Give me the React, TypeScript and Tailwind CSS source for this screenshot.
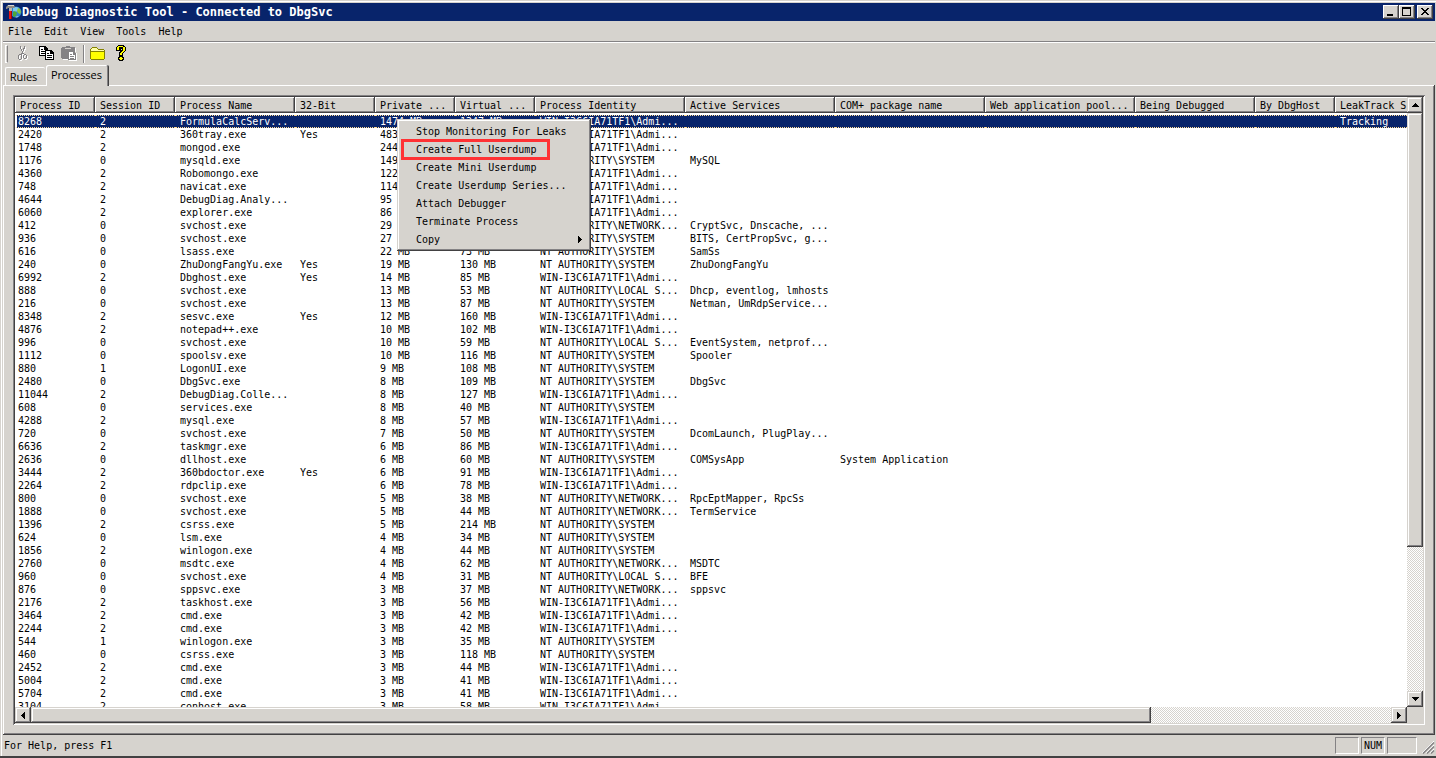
import type { ReactNode } from "react";
import { clsx } from "clsx";

type Process = {
  pid: string;
  session: string;
  name: string;
  bit32?: boolean;
  priv: string;
  virt: string;
  identity: string;
  services?: string;
  com?: string;
  leak?: string;
};

const ADMIN = "WIN-I3C6IA71TF1\\Admi...";
const SYSTEM = "NT AUTHORITY\\SYSTEM";
const NETWORK = "NT AUTHORITY\\NETWORK...";
const LOCAL = "NT AUTHORITY\\LOCAL S...";

const processes: Process[] = [
  { pid: "8268", session: "2", name: "FormulaCalcServ...", priv: "1474 MB", virt: "1347 MB", identity: ADMIN, leak: "Tracking" },
  { pid: "2420", session: "2", name: "360tray.exe", bit32: true, priv: "483 MB", virt: "", identity: ADMIN },
  { pid: "1748", session: "2", name: "mongod.exe", priv: "244 MB", virt: "", identity: ADMIN },
  { pid: "1176", session: "0", name: "mysqld.exe", priv: "149 MB", virt: "", identity: SYSTEM, services: "MySQL" },
  { pid: "4360", session: "2", name: "Robomongo.exe", priv: "122 MB", virt: "", identity: ADMIN },
  { pid: "748", session: "2", name: "navicat.exe", priv: "114 MB", virt: "", identity: ADMIN },
  { pid: "4644", session: "2", name: "DebugDiag.Analy...", priv: "95 MB", virt: "", identity: ADMIN },
  { pid: "6060", session: "2", name: "explorer.exe", priv: "86 MB", virt: "", identity: ADMIN },
  { pid: "412", session: "0", name: "svchost.exe", priv: "29 MB", virt: "", identity: NETWORK, services: "CryptSvc, Dnscache, ..." },
  { pid: "936", session: "0", name: "svchost.exe", priv: "27 MB", virt: "", identity: SYSTEM, services: "BITS, CertPropSvc, g..." },
  { pid: "616", session: "0", name: "lsass.exe", priv: "22 MB", virt: "73 MB", identity: SYSTEM, services: "SamSs" },
  { pid: "240", session: "0", name: "ZhuDongFangYu.exe", bit32: true, priv: "19 MB", virt: "130 MB", identity: SYSTEM, services: "ZhuDongFangYu" },
  { pid: "6992", session: "2", name: "Dbghost.exe", bit32: true, priv: "14 MB", virt: "85 MB", identity: ADMIN },
  { pid: "888", session: "0", name: "svchost.exe", priv: "13 MB", virt: "53 MB", identity: LOCAL, services: "Dhcp, eventlog, lmhosts" },
  { pid: "216", session: "0", name: "svchost.exe", priv: "13 MB", virt: "87 MB", identity: SYSTEM, services: "Netman, UmRdpService..." },
  { pid: "8348", session: "2", name: "sesvc.exe", bit32: true, priv: "12 MB", virt: "160 MB", identity: ADMIN },
  { pid: "4876", session: "2", name: "notepad++.exe", priv: "10 MB", virt: "102 MB", identity: ADMIN },
  { pid: "996", session: "0", name: "svchost.exe", priv: "10 MB", virt: "59 MB", identity: LOCAL, services: "EventSystem, netprof..." },
  { pid: "1112", session: "0", name: "spoolsv.exe", priv: "10 MB", virt: "116 MB", identity: SYSTEM, services: "Spooler" },
  { pid: "880", session: "1", name: "LogonUI.exe", priv: "9 MB", virt: "108 MB", identity: SYSTEM },
  { pid: "2480", session: "0", name: "DbgSvc.exe", priv: "8 MB", virt: "109 MB", identity: SYSTEM, services: "DbgSvc" },
  { pid: "11044", session: "2", name: "DebugDiag.Colle...", priv: "8 MB", virt: "127 MB", identity: ADMIN },
  { pid: "608", session: "0", name: "services.exe", priv: "8 MB", virt: "40 MB", identity: SYSTEM },
  { pid: "4288", session: "2", name: "mysql.exe", priv: "8 MB", virt: "57 MB", identity: ADMIN },
  { pid: "720", session: "0", name: "svchost.exe", priv: "7 MB", virt: "50 MB", identity: SYSTEM, services: "DcomLaunch, PlugPlay..." },
  { pid: "6636", session: "2", name: "taskmgr.exe", priv: "6 MB", virt: "86 MB", identity: ADMIN },
  { pid: "2636", session: "0", name: "dllhost.exe", priv: "6 MB", virt: "60 MB", identity: SYSTEM, services: "COMSysApp", com: "System Application" },
  { pid: "3444", session: "2", name: "360bdoctor.exe", bit32: true, priv: "6 MB", virt: "91 MB", identity: ADMIN },
  { pid: "2264", session: "2", name: "rdpclip.exe", priv: "6 MB", virt: "78 MB", identity: ADMIN },
  { pid: "800", session: "0", name: "svchost.exe", priv: "5 MB", virt: "38 MB", identity: NETWORK, services: "RpcEptMapper, RpcSs" },
  { pid: "1888", session: "0", name: "svchost.exe", priv: "5 MB", virt: "44 MB", identity: NETWORK, services: "TermService" },
  { pid: "1396", session: "2", name: "csrss.exe", priv: "5 MB", virt: "214 MB", identity: SYSTEM },
  { pid: "624", session: "0", name: "lsm.exe", priv: "4 MB", virt: "34 MB", identity: SYSTEM },
  { pid: "1856", session: "2", name: "winlogon.exe", priv: "4 MB", virt: "44 MB", identity: SYSTEM },
  { pid: "2760", session: "0", name: "msdtc.exe", priv: "4 MB", virt: "62 MB", identity: NETWORK, services: "MSDTC" },
  { pid: "960", session: "0", name: "svchost.exe", priv: "4 MB", virt: "31 MB", identity: LOCAL, services: "BFE" },
  { pid: "876", session: "0", name: "sppsvc.exe", priv: "3 MB", virt: "37 MB", identity: NETWORK, services: "sppsvc" },
  { pid: "2176", session: "2", name: "taskhost.exe", priv: "3 MB", virt: "56 MB", identity: ADMIN },
  { pid: "3464", session: "2", name: "cmd.exe", priv: "3 MB", virt: "42 MB", identity: ADMIN },
  { pid: "2244", session: "2", name: "cmd.exe", priv: "3 MB", virt: "42 MB", identity: ADMIN },
  { pid: "544", session: "1", name: "winlogon.exe", priv: "3 MB", virt: "35 MB", identity: SYSTEM },
  { pid: "460", session: "0", name: "csrss.exe", priv: "3 MB", virt: "118 MB", identity: SYSTEM },
  { pid: "2452", session: "2", name: "cmd.exe", priv: "3 MB", virt: "44 MB", identity: ADMIN },
  { pid: "5004", session: "2", name: "cmd.exe", priv: "3 MB", virt: "41 MB", identity: ADMIN },
  { pid: "5704", session: "2", name: "cmd.exe", priv: "3 MB", virt: "41 MB", identity: ADMIN },
  { pid: "3104", session: "2", name: "conhost.exe", priv: "3 MB", virt: "58 MB", identity: ADMIN },
];

const columns = [
  { label: "Process ID", width: "w-[80px]" },
  { label: "Session ID", width: "w-[80px]" },
  { label: "Process Name", width: "w-[120px]" },
  { label: "32-Bit", width: "w-[80px]" },
  { label: "Private ...", width: "w-[80px]" },
  { label: "Virtual ...", width: "w-[80px]" },
  { label: "Process Identity", width: "w-[150px]" },
  { label: "Active Services", width: "w-[150px]" },
  { label: "COM+ package name", width: "w-[150px]" },
  { label: "Web application pool...", width: "w-[150px]" },
  { label: "Being Debugged", width: "w-[120px]" },
  { label: "By DbgHost", width: "w-[80px]" },
  { label: "LeakTrack S...", width: "w-[120px]" },
];

const menuItems = [
  "Stop Monitoring For Leaks",
  "Create Full Userdump",
  "Create Mini Userdump",
  "Create Userdump Series...",
  "Attach Debugger",
  "Terminate Process",
  "Copy",
];

const raised =
  "bg-[#d6d3ce] shadow-[inset_-1px_-1px_0_#424142,inset_1px_1px_0_#d6d3ce,inset_-2px_-2px_0_#848284,inset_2px_2px_0_#fff]";
const raisedThin =
  "bg-[#d6d3ce] shadow-[inset_-1px_-1px_0_#424142,inset_1px_1px_0_#fff,inset_-2px_-2px_0_#848284]";
const track =
  "bg-[length:2px_2px] bg-[repeating-conic-gradient(#fff_0_25%,#d6d3ce_0_50%)]";

const arrows = {
  up: "M4 0h1v1h1v1h1v1h1v1H1V3h1V2h1V1h1z",
  down: "M1 0h7v1H7v1H6v1H5v1H4V3H3V2H2V1H1z",
  left: "M4 0v7H3V6H2V5H1V4H0V3h1V2h1V1h1V0z",
  right: "M0 0v7h1V6h1V5h1V4h1V3H3V2H2V1H1V0z",
};

function ScrollButton({ dir }: { dir: keyof typeof arrows }) {
  const vertical = dir === "up" || dir === "down";
  return (
    <button type="button" aria-label={`Scroll ${dir}`} className={clsx("flex size-4 shrink-0 items-center justify-center", raised)}>
      <svg width={vertical ? 9 : 4} height={vertical ? 4 : 7} shapeRendering="crispEdges">
        <path d={arrows[dir]} />
      </svg>
    </button>
  );
}

function AppIcon() {
  return (
    <svg width="16" height="16" viewBox="0 0 16 16">
      <circle cx="10" cy="8" r="5.5" fill="#2f84cc" />
      <path d="M7 4q3-2 6 0l-1 3-3 1-2-1z" fill="#7cc8ee" />
      <path d="M7 8l2-1 2 2-1 3-2 1-1-1z" fill="#4fa83a" />
      <path d="M12 4l2 1 1 3-1 2-2-1-1-2z" fill="#8cc63f" />
      <path d="M9 13l4-1-2 1.500z" fill="#c8e6f4" />
      <path d="M0 3l2-2h6l1 2-1 1H2L1 5H0z" fill="#8c8a84" />
      <path d="M2 1h6v1H2z" fill="#d8d6d0" />
      <path d="M3 4h3v3H3z" fill="#b8b4ac" />
      <path d="M3 7h3v8H3z" fill="#e81414" />
      <path d="M5 7h1v8H5z" fill="#9c0808" />
    </svg>
  );
}

function ToolButton({ label, children }: { label: string; children: ReactNode }) {
  return (
    <button type="button" aria-label={label} className="flex h-5 w-[23px] items-center justify-start pl-[3px]">
      <svg width="16" height="16" viewBox="0 0 16 16" shapeRendering="crispEdges">
        {children}
      </svg>
    </button>
  );
}

// The scissors are drawn twice: a white copy one pixel down-right gives the disabled look.
const scissors =
  "M5 1h1v3H5zM9 1h1v3H9zM6 4h1v2H6zM8 3h1v3H8zM7 6h1v3H7zM6 8h1v2H6zM8 8h1v1H8zM9 9h2v1H9zM8 10h1v3H8zM11 10h1v3h-1zM9 13h2v1H9zM4 9h2v1H4zM3 10h1v4H3zM6 10h1v4H6zM4 14h2v1H4z";

function Toolbar() {
  return (
    <div role="toolbar" aria-label="Standard" className="flex h-[22px] shrink-0 items-start pl-0.5">
      <div className="mt-0.5 mr-1 h-[18px] w-[3px] border-y border-l border-r border-white border-r-[#848284]" />
      <ToolButton label="Cut">
        <path d={scissors} fill="#fff" transform="translate(1 1)" />
        <path d={scissors} fill="#848284" />
      </ToolButton>
      <ToolButton label="Copy">
        <path d="M1 1h6l3 3v7H1z" />
        <path d="M2 2h4v3h3v5H2z" fill="#fff" />
        <path d="M3 4h2v1H3zM3 6h4v1H3zM3 8h4v1H3z" />
        <path d="M7 5h6l3 3v7H7z" />
        <path d="M8 6h4v3h3v5H8z" fill="#fff" />
        <path d="M13 7h1v1h-1zM9 8h2v1H9zM9 10h5v1H9zM9 12h5v1H9z" />
      </ToolButton>
      <ToolButton label="Paste">
        <path d="M2 14h6v1H2zM14 3h1v4h-1zM15 8h1v8H8v-1h7z" fill="#fff" />
        <path d="M1 2h4V1h4v1h5v5H8v7H1l-1-1V3z" fill="#848284" />
        <path d="M4 3h6v1H4z" fill="#d6d3ce" />
        <path d="M7 6h5l3 3v6H7z" fill="#848284" />
        <path d="M8 7h4v3h2v4H8z" fill="#fff" />
        <path d="M9 9h2v1H9zM9 11h4v1H9zM9 13h4v1H9z" fill="#848284" />
      </ToolButton>
      <div className="mx-0.5 mt-0.5 h-[18px] w-0.5 border-l border-r border-l-[#848284] border-r-white" />
      <ToolButton label="Open">
        <path d="M2 2h5v1h1v1h6v1h1v9h-1v1H1v-1H0V4h1V3h1z" fill="#848200" />
        <path d="M2 3h5v1h1v1h6v1H1V4h1z" fill="#ffffa5" />
        <path d="M1 7h13v7H1z" fill="#ff0" />
        <path d="M1 6h12v1H1z" fill="#848200" />
      </ToolButton>
      <ToolButton label="Help">
        <path d="M5 0h6v1h1v1h1v4h-1v1h-1v1h-1v3H6V7h1V6h1V5h1V4H8v2H3V2h1V1h1zM6 11h4v1h1v3h-1v1H6v-1H5v-3h1z" />
        <path d="M5 1h5v1h2v4h-1v1h-1v1H9v2H7V8h1V7h1V6h1V2H6v3H4V2h1zM7 12h2v1h1v1H9v1H7v-1H6v-1h1z" fill="#ff0" />
      </ToolButton>
    </div>
  );
}

function ProcessTable() {
  return (
    <table className="w-full table-fixed border-separate border-spacing-0 text-left">
      <thead>
        <tr>
          {columns.map((c) => (
            <th key={c.label} scope="col" className={clsx("p-0 pb-0.5 font-normal", c.width)}>
              <div className={clsx("h-4 overflow-hidden pt-px pl-[5px] leading-4 whitespace-nowrap", raisedThin)}>{c.label}</div>
            </th>
          ))}
        </tr>
      </thead>
      <tbody>
        {processes.map((p, i) => {
          const cells = [
            p.pid, p.session, p.name, p.bit32 ? "Yes" : "", p.priv, p.virt,
            p.identity, p.services, p.com, "", "", "", p.leak,
          ];
          return (
            <tr key={p.pid} aria-selected={i === 0}>
              {cells.map((text, col) => (
                <td
                  key={col}
                  className={clsx(
                    "h-[13px] overflow-hidden p-0 leading-[11px] whitespace-nowrap",
                    col === 0 ? "border-l-2 border-l-white pl-px" : "pl-[5px]",
                    i === 0
                      ? "border-y border-y-[#ffdb94] bg-[#08246b] text-white [border-bottom-style:dotted] [border-top-style:dotted]"
                      : "border-y border-y-transparent",
                  )}
                >
                  {text}
                </td>
              ))}
            </tr>
          );
        })}
      </tbody>
    </table>
  );
}

function ContextMenu() {
  return (
    <div role="menu" className={clsx("absolute top-[22px] left-[382px] w-[194px] p-[3px]", raised)}>
      {menuItems.map((item) => (
        <button key={item} type="button" role="menuitem" className="relative flex h-[18px] w-full items-center justify-between pr-1.5 pl-4">
          {item}
          {item === "Copy" && (
            <svg width="4" height="7" shapeRendering="crispEdges">
              <path d={arrows.right} />
            </svg>
          )}
          {item === "Create Full Userdump" && (
            <span className="absolute -top-px left-px h-[21px] w-[149px] border-3 border-[#ff3134]" />
          )}
        </button>
      ))}
    </div>
  );
}

export default function App() {
  return (
    <div className="flex h-screen flex-col overflow-hidden border-b-2 border-b-[#424142] bg-[#d6d3ce] pt-[3px] pr-px pl-[3px] font-['DejaVu_Sans_Mono',monospace] text-[10px] text-black shadow-[inset_1px_1px_0_#d6d3ce,inset_2px_2px_0_#fff]">
      <header className="flex h-[18px] shrink-0 items-center bg-[#08246b] pr-0.5 pl-[3px] text-white">
        <AppIcon />
        <h1 className="flex-1 text-[12px] leading-[18px] font-bold">Debug Diagnostic Tool - Connected to DbgSvc</h1>
        <button type="button" aria-label="Minimize" className={clsx("h-[14px] w-4", raisedThin)}>
          <svg width="16" height="14" shapeRendering="crispEdges"><path d="M4 9h6v2H4z" /></svg>
        </button>
        <button type="button" aria-label="Maximize" className={clsx("h-[14px] w-4", raisedThin)}>
          <svg width="16" height="14" shapeRendering="crispEdges"><path d="M3 2h9v9H3zM4 4v6h7V4z" fillRule="evenodd" /></svg>
        </button>
        <button type="button" aria-label="Close" className={clsx("ml-0.5 h-[14px] w-4", raisedThin)}>
          <svg width="16" height="14" shapeRendering="crispEdges">
            <path d="M4 3h2v1h1v1h2V4h1V3h2v1h-1v1h-1v1H9v1h1v1h1v1h1v1h-2V9H9V8H7v1H6v1H4V9h1V8h1V7h1V6H6V5H5V4H4z" />
          </svg>
        </button>
      </header>

      <nav className="flex h-5 shrink-0 items-center gap-3 pl-[5px]">
        {["File", "Edit", "View", "Tools", "Help"].map((m) => (
          <button key={m} type="button">{m}</button>
        ))}
      </nav>
      <div className="h-0.5 shrink-0 border-t border-b border-t-[#848284] border-b-white" />

      <Toolbar />

      <div role="tablist" className="flex h-5 shrink-0 items-end gap-px pl-0.5 font-['Open_Sans',sans-serif] text-[11px]">
        <button type="button" role="tab" aria-selected={false} className="h-[18px] w-10 rounded-t-xs border-t border-l border-white pr-1 leading-4">
          Rules
        </button>
        <button
          type="button"
          role="tab"
          aria-selected
          className="relative -mb-px h-[21px] w-[63px] rounded-t-xs bg-[#d6d3ce] pr-0.5 pb-0.5 leading-4 shadow-[inset_-1px_0_0_#424142,inset_1px_1px_0_#fff,inset_-2px_0_0_#848284]"
        >
          Processes
        </button>
      </div>

      <main className={clsx("flex min-h-0 flex-1 p-[10px]", raisedThin)}>
        <div className="relative flex min-w-0 flex-1 flex-col p-0.5 shadow-[inset_1px_1px_0_#848284,inset_-1px_-1px_0_#fff,inset_2px_2px_0_#424142,inset_-2px_-2px_0_#d6d3ce]">
          <div className="relative flex min-h-0 flex-1">
            <div className="min-w-0 flex-1 overflow-hidden bg-white">
              <ProcessTable />
            </div>
            <div className={clsx("flex w-4 shrink-0 flex-col", track)}>
              <ScrollButton dir="up" />
              <div className={clsx("grow-3 basis-0", raised)} />
              <div className="grow basis-0" />
              <ScrollButton dir="down" />
            </div>
            <ContextMenu />
          </div>
          <div className="flex h-4 shrink-0">
            <div className={clsx("flex flex-1", track)}>
              <ScrollButton dir="left" />
              <div className={clsx("grow-14 basis-0", raised)} />
              <div className="grow-3 basis-0" />
              <ScrollButton dir="right" />
            </div>
            <div className="w-4 bg-[#d6d3ce]" />
          </div>
        </div>
      </main>

      <footer className="flex h-[21px] shrink-0 items-center gap-0.5 pl-px">
        <p className="flex-1">For Help, press F1</p>
        <div className="h-[17px] w-6 border border-[#848284] border-r-white border-b-white" />
        <div className="h-[17px] w-6 border border-[#848284] border-r-white border-b-white text-center leading-[15px]">NUM</div>
        <div className="h-[17px] w-[30px] border border-[#848284] border-r-white border-b-white" />
        <svg width="16" height="19" viewBox="0 0 16 19">
          <path d="M3 17L15 5M7 17L15 9M11 17L15 13" stroke="#fff" />
          <path d="M4 17.500L15 6.500M8 17.500L15 10.500M12 17.500L15 14.500" stroke="#848284" strokeWidth="1.500" />
        </svg>
      </footer>
    </div>
  );
}
